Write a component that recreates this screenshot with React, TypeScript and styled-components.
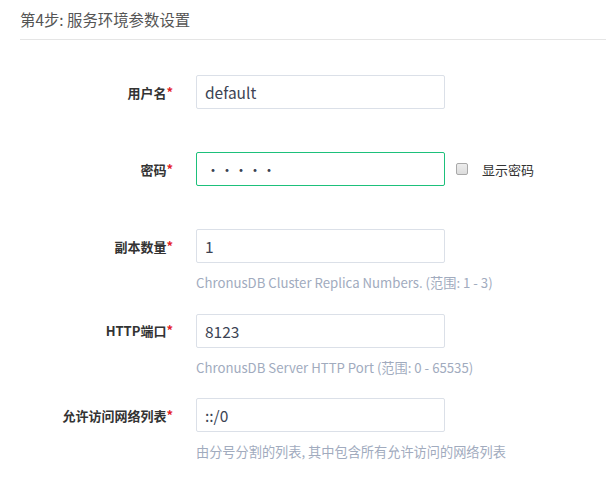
import React, { useState } from "react";
import styled, { createGlobalStyle } from "styled-components";

const GlobalStyle = createGlobalStyle`
  html, body { margin: 0; padding: 0; background: #fff; }
  body {
    font-family: "Noto Sans CJK SC", "Noto Sans", sans-serif;
    color: #333;
  }
  * { box-sizing: border-box; }
`;

const Page = styled.div`
  width: 606px;
  height: 478px;
  padding-left: 20px;
  overflow: hidden;
`;

const StepTitle = styled.h3`
  margin: 7px 0 0 0;
  padding-bottom: 8px;
  border-bottom: 1px solid #e5e5e5;
  font-size: 15.4px;
  line-height: 24px;
  font-weight: 400;
  color: #555;
`;

const Form = styled.form`
  display: flex;
  flex-direction: column;
  gap: 21.5px;
  margin-top: 35px;
`;

const Group = styled.div`
  display: flex;
  align-items: flex-start;
`;

const Label = styled.label`
  width: 153px;
  flex: none;
  height: 34px;
  display: flex;
  align-items: center;
  justify-content: flex-end;
  font-size: 13px;
  font-weight: 700;
  color: #333;
`;

const Required = styled.span`
  color: #e3212b;
  position: relative;
  top: -1px;
`;

const Field = styled.div`
  margin-left: 23px;
  min-height: 55.5px;
  display: flex;
  flex-direction: column;
`;

const InputRow = styled.div`
  display: flex;
  align-items: center;
`;

const Input = styled.input<{ $focused?: boolean }>`
  width: 249px;
  height: 34px;
  padding: 0 8px;
  border: 1px solid ${(p) => (p.$focused ? "#1dc07b" : "#dbe0e8")};
  border-radius: 2px;
  font-family: "Noto Sans CJK SC", sans-serif;
  font-size: 15.5px;
  color: #3c4353;
  outline: none;
  background: #fff;
`;

const PasswordInput = styled(Input)`
  letter-spacing: 0;
  font-size: 14px;
  padding-left: 9px;
`;

const CheckLabel = styled.label`
  display: flex;
  align-items: center;
  margin-left: 11px;
  font-size: 13px;
  color: #333;
`;

const Checkbox = styled.span`
  width: 12px;
  height: 12px;
  border: 1px solid #a9a9a9;
  border-radius: 2px;
  background: linear-gradient(#ededed, #dcdcdc);
  margin-right: 14px;
  flex: none;
`;

const Help = styled.div`
  margin-top: 11px;
  font-size: 13.2px;
  line-height: 18px;
  color: #a1abbe;
`;

export default function App() {
  const [show] = useState(false);
  return (
    <>
      <GlobalStyle />
      <Page>
        <StepTitle>第4步: 服务环境参数设置</StepTitle>
        <Form onSubmit={(e) => e.preventDefault()}>
          <Group>
            <Label>用户名<Required>*</Required></Label>
            <Field>
              <Input defaultValue="default" />
            </Field>
          </Group>
          <Group>
            <Label>密码<Required>*</Required></Label>
            <Field>
              <InputRow>
                <PasswordInput $focused type={show ? "text" : "password"} defaultValue="•••••" />
                <CheckLabel>
                  <Checkbox />
                  显示密码
                </CheckLabel>
              </InputRow>
            </Field>
          </Group>
          <Group>
            <Label>副本数量<Required>*</Required></Label>
            <Field>
              <Input defaultValue="1" />
              <Help>ChronusDB Cluster Replica Numbers. (范围: 1 - 3)</Help>
            </Field>
          </Group>
          <Group>
            <Label>HTTP端口<Required>*</Required></Label>
            <Field>
              <Input defaultValue="8123" />
              <Help>ChronusDB Server HTTP Port (范围: 0 - 65535)</Help>
            </Field>
          </Group>
          <Group>
            <Label>允许访问网络列表<Required>*</Required></Label>
            <Field>
              <Input defaultValue="::/0" />
              <Help>由分号分割的列表, 其中包含所有允许访问的网络列表</Help>
            </Field>
          </Group>
        </Form>
      </Page>
    </>
  );
}
